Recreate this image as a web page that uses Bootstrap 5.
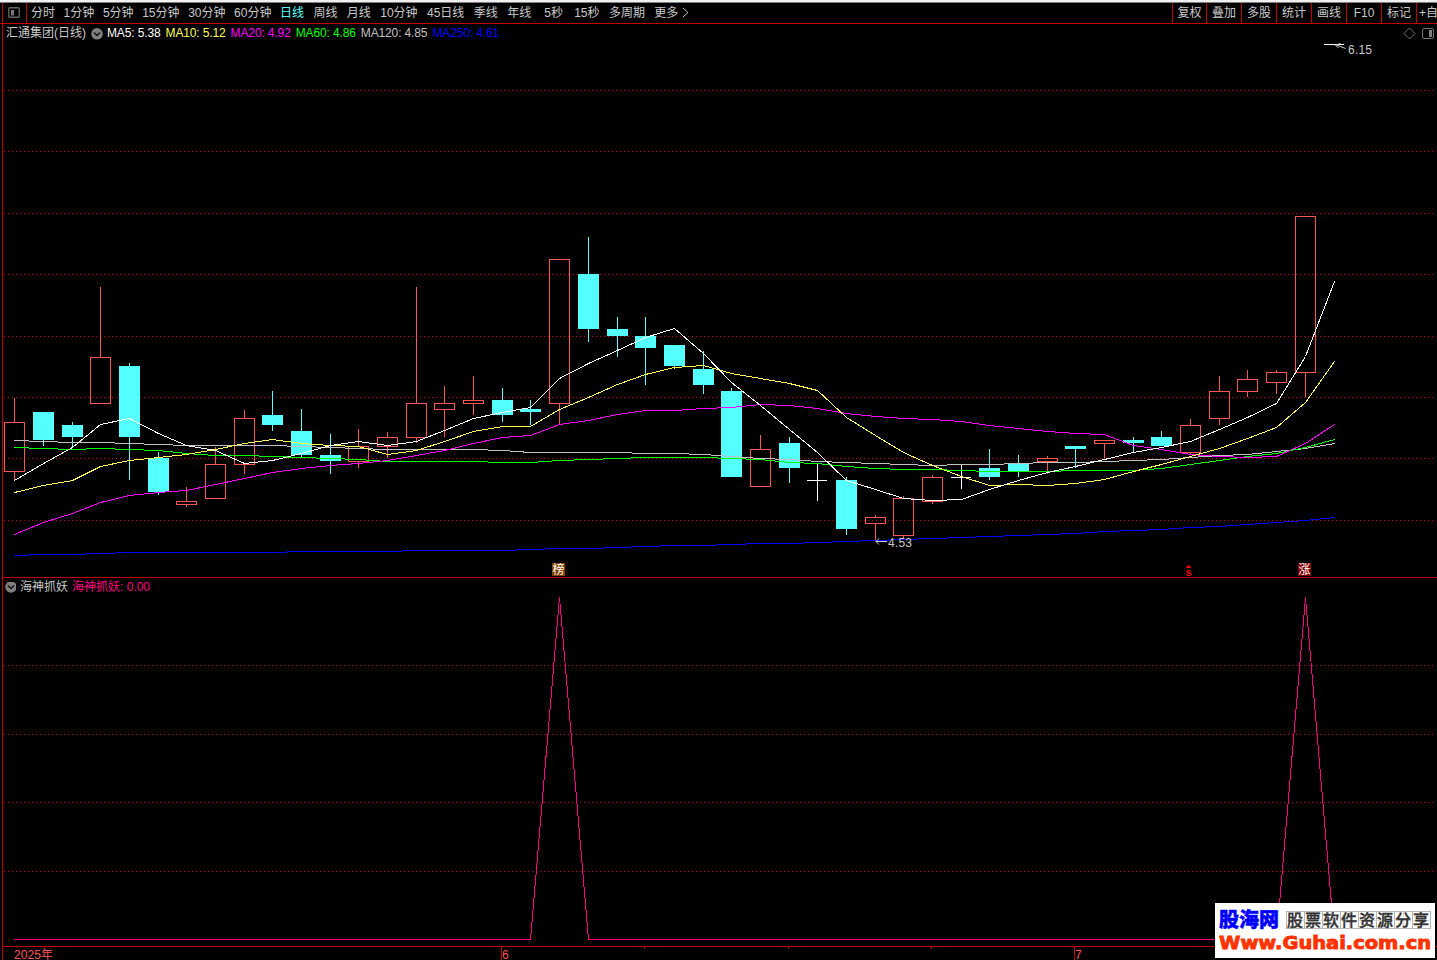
<!DOCTYPE html>
<html lang="zh-CN">
<head>
    <meta charset="utf-8">
    <title>汇通集团 日线</title>
    <meta name="viewport" content="width=device-width, initial-scale=1.0">
    <link href="https://cdn.jsdelivr.net/npm/bootstrap@5.3.2/dist/css/bootstrap.min.css" rel="stylesheet">
    <style>
        body {
            background-color: #000;
            color: #c8c8c8;
            font-family: "Liberation Sans", "Noto Sans CJK SC", sans-serif;
            font-size: 12px;
            line-height: 18px;
            height: 960px;
        }

        svg {
            display: block;
            flex: none;
        }

        svg text {
            font-family: "Liberation Sans", "Noto Sans CJK SC", sans-serif;
            font-size: 12px;
        }

        .window-edge {
            height: 3px;
            background-color: #f0f0f0;
            border-bottom: 1px solid #808080;
        }

        .toolbar {
            height: 21px;
            line-height: 21px;
            border-bottom: 1px solid #c00000;
            padding-left: 2px;
        }

        .layout-btn {
            width: 25px;
            border-left: 1px solid #c00000;
            border-right: 1px solid #c00000;
            padding: 4px 0 0 5px;
        }

        .periods {
            gap: 8.6px;
            padding-left: 4px;
        }

        .periods .active { color: #54ffff; }
        .periods .active, .periods .active ~ span { margin-right: .8px; }
        .periods .active ~ .wide { margin-right: 4.5px; }
        .periods .active ~ .mid { margin-right: 2.6px; }

        .tool-btn {
            width: 35px;
            border-left: 1px solid #c00000;
            text-align: center;
            white-space: nowrap;
            overflow: hidden;
        }

        .tool-btn:first-child { width: 34px; }
        .tool-btn:last-child {
            width: 21px;
            text-align: left;
            padding-left: 2px;
        }

        .legend { height: 18px; }
        .price-panel .legend {
            line-height: 19px;
            padding-left: 3px;
        }

        .legend-icon { margin: 4px 4px 0 5px; }

        .panel {
            margin-left: 2px;
            border-left: 1px solid #c00000;
        }

        .price-panel {
            height: 554px;
            border-bottom: 1px solid #c00000;
        }

        .signal-panel {
            height: 369px;
            border-bottom: 1px solid #c00000;
        }

        .ma-item { margin-right: 5px; letter-spacing: -.13px; }
        .ma5 { color: #fff; }
        .ma10 { color: #ffff54; }
        .ma20 { color: #f0f; }
        .ma60 { color: #0f0; }
        .ma120 { color: #c0c0c0; }
        .ma250 { color: #00f; }
        .signal { color: #ff0080; }

        .site-logo {
            left: 1215px;
            top: 903px;
            width: 220px;
            height: 55px;
            background-color: #fff;
        }
    </style>
</head>
<body class="d-flex flex-column overflow-hidden position-relative">

<div class="window-edge flex-shrink-0"></div>

<nav class="toolbar d-flex flex-shrink-0">
    <div class="layout-btn">
        <svg width="12" height="11" viewBox="0 0 12 11">
            <rect x=".75" y=".75" width="10.5" height="9.5" rx="1" fill="none" stroke="#666" stroke-width="1.3"/>
            <rect x="3" y="3" width="3" height="5.5" fill="#777"/>
        </svg>
    </div>
    <div class="periods d-flex flex-grow-1 text-nowrap">
        <span>分时</span><span>1分钟</span><span>5分钟</span><span>15分钟</span><span>30分钟</span><span>60分钟</span>
        <span class="active">日线</span><span>周线</span><span>月线</span><span>10分钟</span><span>45日线</span>
        <span>季线</span><span class="wide">年线</span><span class="mid">5秒</span><span>15秒</span><span>多周期</span>
        <span class="d-flex">更多
            <svg class="ms-1 mt-1" width="7" height="12" viewBox="0 0 7 12"><path d="M1 1l5 4.5-5 4.5" fill="none" stroke="#c0c0c0"/></svg>
        </span>
    </div>
    <div class="d-flex">
        <div class="tool-btn">复权</div>
        <div class="tool-btn">叠加</div>
        <div class="tool-btn">多股</div>
        <div class="tool-btn">统计</div>
        <div class="tool-btn">画线</div>
        <div class="tool-btn">F10</div>
        <div class="tool-btn">标记</div>
        <div class="tool-btn">+自</div>
    </div>
</nav>

<section class="panel price-panel flex-shrink-0">
    <div class="legend d-flex text-nowrap">
        <span>汇通集团(日线)</span>
        <svg class="legend-icon" width="12" height="12" viewBox="0 0 12 12">
            <circle cx="6" cy="5.8" r="5.8" fill="#808080"/>
            <path d="M3 4.5l3 3 3-3" fill="none" stroke="#111" stroke-width="1.5"/>
        </svg>
        <span class="ma-item ma5">MA5: 5.38</span>
        <span class="ma-item ma10">MA10: 5.12</span>
        <span class="ma-item ma20">MA20: 4.92</span>
        <span class="ma-item ma60">MA60: 4.86</span>
        <span class="ma-item ma120">MA120: 4.85</span>
        <span class="ma-item ma250">MA250: 4.61</span>
        <svg class="ms-auto" width="34" height="18" viewBox="1403 24 34 18">
            <path d="M1409.5 28l5.5 5.5-5.5 5.5-5.5-5.5z" fill="none" stroke="#707070"/>
            <rect x="1422.5" y="28.5" width="11" height="10" rx="1.5" fill="none" stroke="#707070"/>
            <rect x="1429" y="30" width="3" height="7" fill="#808080"/>
        </svg>
    </div>
    <svg id="priceChart" width="1434" height="535" viewBox="3 42 1434 535"></svg>
</section>

<section class="panel signal-panel flex-shrink-0">
    <div class="legend d-flex text-nowrap">
        <svg class="me-1 mt-1" width="13" height="12" viewBox="0 0 13 12">
            <circle cx="8" cy="5" r="5.8" fill="#808080"/>
            <path d="M5 3.5l3 3 3-3" fill="none" stroke="#111" stroke-width="1.5"/>
        </svg>
        <span>海神抓妖</span>
        <span class="signal ms-1">海神抓妖: 0.00</span>
    </div>
    <svg id="signalChart" width="1434" height="350" viewBox="3 596 1434 350"></svg>
</section>

<footer class="panel flex-grow-1">
    <svg id="timeAxis" width="1434" height="13" viewBox="3 947 1434 13"></svg>
</footer>

<div class="site-logo position-absolute">
    <svg width="220" height="55" viewBox="0 0 220 55">
        <text x="4" y="24" textLength="60" style="font-size:20px;font-weight:900" fill="#00f" stroke="#00f" stroke-width=".5">股海网</text>
        <g id="logoCells" fill="none" stroke="#b8b8b8"></g>
        <text x="72" y="23" textLength="142" style="font-size:16px;font-weight:500" fill="#333" stroke="#333" stroke-width=".4">股票软件资源分享</text>
        <text x="4" y="46" textLength="212" lengthAdjust="spacingAndGlyphs" style="font-family:'DejaVu Sans',sans-serif;font-size:18.5px;font-weight:700" fill="#f30" stroke="#f30" stroke-width=".9">Www.Guhai.com.cn</text>
    </svg>
</div>

<script src="https://cdn.jsdelivr.net/npm/bootstrap@5.3.2/dist/js/bootstrap.bundle.min.js"></script>

<script>
const RED = '#ff5454';
const CYAN = '#54ffff';
const STEP = 28.68;

// centre of bar i
const barX = i => Math.floor(14.73 + i * STEP);

// type, high, body top, body bottom, low
const candles = [
    ['u', 398, 422, 471, 480], ['d', 412, 412, 440, 446], ['d', 422, 425, 437, 448], ['u', 287, 357, 403, 403],
    ['d', 363, 366, 437, 480], ['d', 452, 458, 492, 495], ['u', 487, 501, 504, 507], ['u', 447, 464, 498, 498],
    ['u', 410, 418, 464, 474], ['d', 391, 415, 425, 431], ['d', 409, 431, 455, 457], ['d', 434, 455, 461, 474],
    ['u', 429, 446, 461, 468], ['u', 432, 437, 446, 458], ['u', 287, 403, 437, 443], ['u', 386, 403, 409, 437],
    ['u', 376, 400, 403, 415], ['d', 388, 400, 415, 422], ['d', 400, 409, 412, 425], ['u', 259, 259, 403, 424],
    ['d', 237, 274, 329, 342], ['d', 317, 329, 336, 357], ['d', 317, 336, 348, 385], ['d', 345, 345, 366, 369],
    ['d', 351, 369, 385, 394], ['d', 388, 391, 477, 477], ['u', 435, 449, 486, 486], ['d', 437, 443, 468, 483],
    ['x', 464, 480, 480, 501], ['d', 477, 480, 529, 535], ['u', 515, 517, 523, 541], ['u', 496, 498, 535, 538],
    ['u', 475, 477, 501, 504], ['x', 465, 477, 477, 489], ['d', 449, 468, 477, 480], ['d', 455, 463, 472, 477],
    ['u', 456, 458, 461, 474], ['d', 446, 446, 449, 468], ['u', 440, 440, 443, 458], ['d', 437, 440, 443, 452],
    ['d', 431, 437, 446, 446], ['u', 419, 425, 452, 455], ['u', 376, 391, 418, 425], ['u', 370, 379, 391, 397],
    ['u', 370, 372, 382, 394], ['u', 216, 216, 372, 397], ['x', 44, 44, 44, 45]
];

const averages = [
    ['#0000ff', [555,554,554,553,552,552,552,552,552,552,551,551,551,551,550,550,550,550,549,548,548,547,546,545,545,544,543,543,542,541,540,539,538,537,536,535,534,533,531,530,529,527,526,524,522,520,517]],
    ['#c0c0c0', [440,441,442,442,443,444,445,445,445,445,446,447,448,449,449,449,449,450,452,452,452,452,453,453,454,456,458,459,461,462,463,464,465,464,464,463,462,462,461,460,459,457,455,454,451,448,443]],
    ['#00ff00', [447,448,449,448,449,450,453,455,455,456,457,458,459,461,461,461,461,462,462,460,459,458,457,457,457,458,459,462,463,466,468,469,469,470,471,471,471,470,470,470,468,464,460,456,453,447,439]],
    ['#ff00ff', [534,522,513,502,495,492,490,484,478,472,468,465,463,460,455,450,443,437,435,424,420,414,410,410,408,407,404,405,408,413,416,418,419,421,425,428,431,433,434,445,449,454,456,457,456,443,424]],
    ['#ffff54', [492,485,480,466,460,457,454,449,443,439,443,445,446,454,450,441,431,426,426,409,397,384,374,367,365,373,378,383,390,417,435,452,465,476,485,484,485,483,479,471,464,456,448,438,427,402,361]],
    ['#ffffff', [480,463,447,424,418,433,445,450,463,460,453,445,441,445,441,430,418,412,407,378,363,350,337,328,353,382,405,429,452,480,489,498,500,499,489,480,472,466,459,452,447,441,429,417,403,356,281]]
];

function gridLine(y) {
    return `<path d="M4 ${y}.5H1434" stroke="#c00000" stroke-dasharray="1 3" shape-rendering="crispEdges"/>`;
}

function candle([type, high, top, bottom, low], i) {
    const x = barX(i);
    if (type === 'd') {
        return `<rect x="${x}" y="${high}" width="1" height="${low - high}" fill="${CYAN}"/>` +
            `<rect x="${x - 10}" y="${top}" width="21" height="${bottom - top}" fill="${CYAN}"/>`;
    }
    if (type === 'x') {
        return `<rect x="${x}" y="${high}" width="1" height="${low - high}" fill="#fff"/>` +
            `<rect x="${x - 10}" y="${top}" width="20" height="1" fill="#fff"/>`;
    }
    return `<rect x="${x}" y="${high}" width="1" height="${top - high}" fill="${RED}"/>` +
        `<rect x="${x}" y="${bottom}" width="1" height="${low - bottom}" fill="${RED}"/>` +
        `<rect x="${x - 9.5}" y="${top + .5}" width="20" height="${bottom - top}" fill="none" stroke="${RED}"/>`;
}

function line(points, color) {
    const d = points.map(p => `${p[0] + .5},${p[1] + .5}`).join(' ');
    return `<polyline points="${d}" fill="none" stroke="${color}" stroke-linecap="square" shape-rendering="crispEdges"/>`;
}

let price = [90, 151, 213, 274, 336, 397, 458, 520].map(gridLine).join('');
price += candles.map(candle).join('');
price += averages.map(([color, values]) => line(values.map((y, i) => [barX(i), y]), color)).join('');

// high and low labels
price += `<path d="M1335.5 44.5l10 4M1340.5 43.5l-5 1.5 3 3" fill="none" stroke="#d0d0d0"/>
    <text x="1348" y="54" textLength="24" fill="#c8c8c8">6.15</text>
    <path d="M875.5 541.5H887M879 538.5l-3 3 3 3" fill="none" stroke="#d0d0d0"/>
    <text x="888" y="547" textLength="24" fill="#c8c8c8">4.53</text>`;

// event marks
price += `<rect x="552" y="563" width="13" height="13" fill="#804000"/>
    <text x="552.5" y="574" fill="#fff">榜</text>
    <rect x="1298" y="563" width="13" height="13" fill="#800000"/>
    <text x="1298.5" y="574" fill="#fff">涨</text>
    <path d="M1188.5 565l3 3h-6z" fill="#f00"/>
    <text x="1185.5" y="575.5" style="font-size:11px" fill="#f00" font-weight="700">s</text>`;
document.getElementById('priceChart').innerHTML = price;

let signal = [665, 734, 802, 871].map(gridLine).join('');
signal += line([[14, 939], [530, 939], [559, 597], [588, 939], [1276, 939], [1305, 597], [1334, 939]], '#ff0080');
document.getElementById('signalChart').innerHTML = signal;

let axis = [501, 1074].map(x => `<rect x="${x}" y="947" width="1" height="13" fill="#c00000"/>`).join('');
axis += [644, 788, 931].map(x => `<rect x="${x}" y="947" width="1" height="2" fill="#c00000"/>`).join('');
axis += `<text x="14" y="958.5" textLength="39" fill="${RED}">2025年</text>
    <text x="502" y="959" fill="${RED}">6</text>
    <text x="1075" y="959" fill="${RED}">7</text>`;
document.getElementById('timeAxis').innerHTML = axis;

let cells = '';
for (let i = 0; i < 8; i++) {
    const x = 71.5 + i * 18;
    cells += `<rect x="${x}" y="8.5" width="18" height="17"/><path d="M${x} 17.5h18M${x + 9} 8.5v17" stroke="#ddd"/>`;
}
document.getElementById('logoCells').innerHTML = cells;
</script>
</body>
</html>
